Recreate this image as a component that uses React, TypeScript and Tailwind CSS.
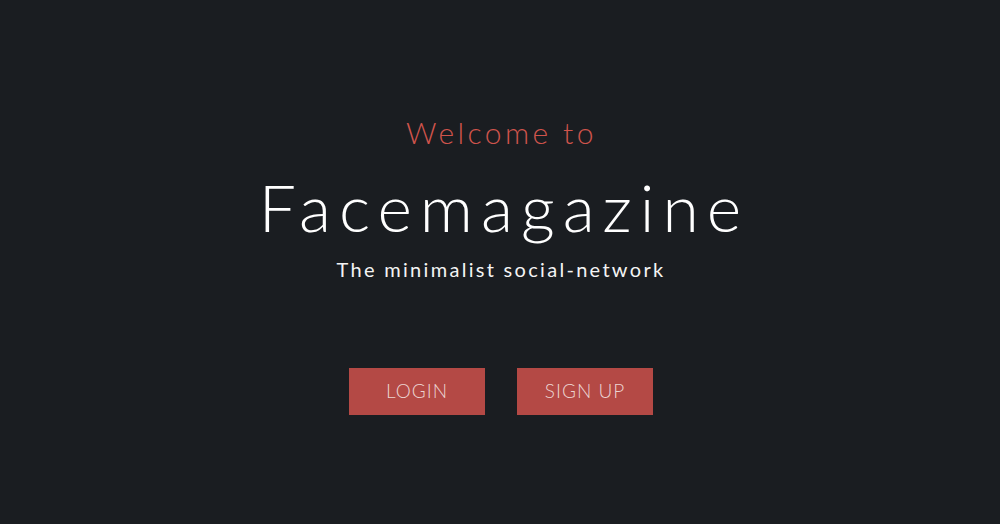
export default function App() {
  return (
    <div className="h-[524px] w-full bg-[#1a1d21] flex flex-col items-center pt-[112px] font-['Lato','Open_Sans',sans-serif]">
      <h2 className="text-[30px] leading-[40px] font-light tracking-[3.4px] pl-[3px] text-[#cf544c]">Welcome to</h2>
      <h1 className="mt-[19px] text-[66px] leading-[72px] font-light tracking-[8px] pl-[8px] text-white">Facemagazine</h1>
      <p className="mt-[13px] text-[20px] leading-[26px] font-normal tracking-[2.3px] pl-[2px] text-[#f4f4f4]">The minimalist social-network</p>
      <div className="mt-[86px] ml-[2px] flex gap-8">
        <button className="w-[136px] h-[47px] bg-[#b44945] text-[19px] font-light tracking-[1px] text-[#ecd4d2]">LOGIN</button>
        <button className="w-[136px] h-[47px] bg-[#b44945] text-[19px] font-light tracking-[1px] text-[#ecd4d2]">SIGN UP</button>
      </div>
    </div>
  );
}
